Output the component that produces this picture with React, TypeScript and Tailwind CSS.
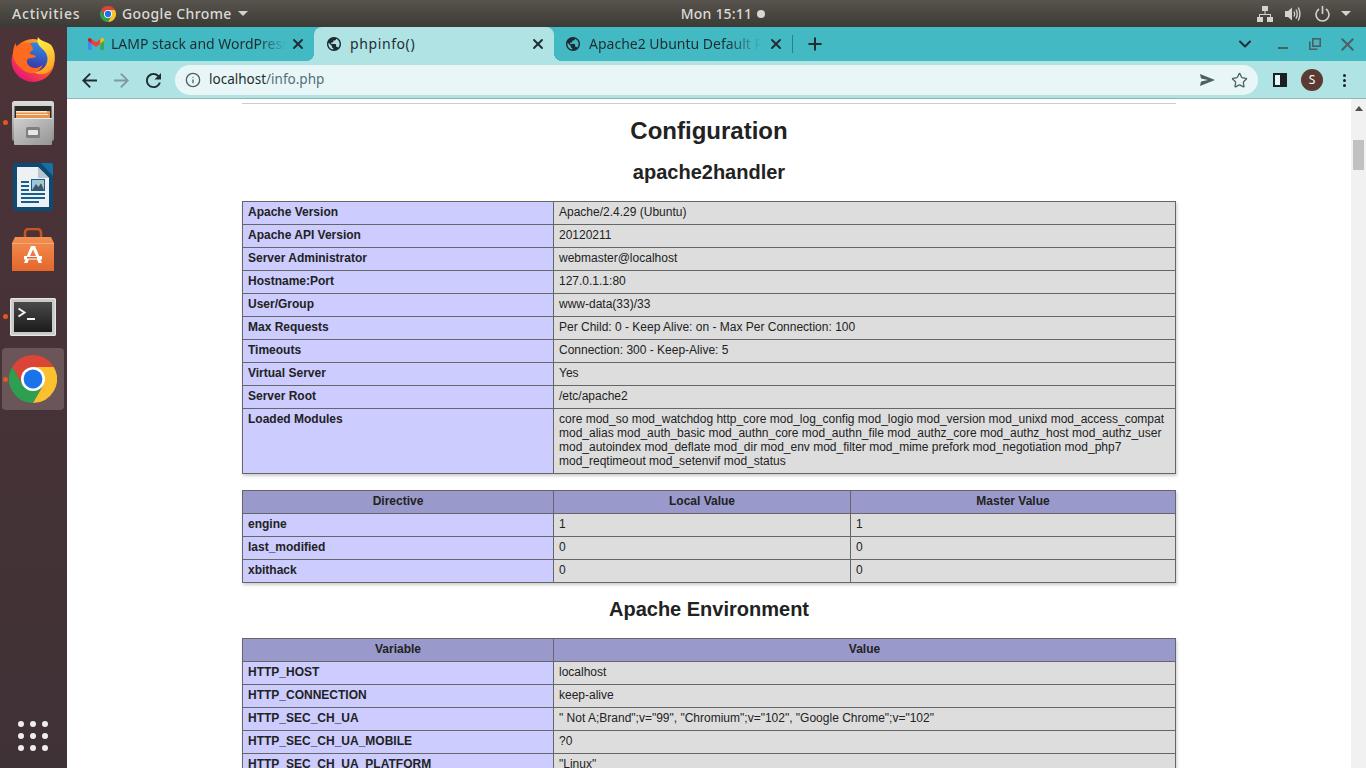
import React from "react";
import { Info, Star, ChevronDown, X, Plus } from "lucide-react";

const GLOBE = "M12 2C6.48 2 2 6.48 2 12s4.48 10 10 10 10-4.48 10-10S17.52 2 12 2zm-1 17.93c-3.95-.49-7-3.85-7-7.93 0-.62.08-1.21.21-1.79L9 15v1c0 1.1.9 2 2 2v1.93zm6.9-2.54c-.26-.81-1-1.39-1.9-1.39h-1v-3c0-.55-.45-1-1-1H8v-2h2c.55 0 1-.45 1-1V7h2c1.1 0 2-.9 2-2v-.41c2.93 1.19 5 4.06 5 7.41 0 2.08-.8 3.97-2.1 5.39z";

function Globe() {
  return (
    <svg width="14" height="14" viewBox="2 2 20 20" className="shrink-0">
      <path d={GLOBE} fill="#1f2a30" />
    </svg>
  );
}

function Chrome({ size }: { size: number }) {
  return (
    <svg width={size} height={size} viewBox="0 0 48 48" className="shrink-0">
      <path d="M44.8 12A24 24 0 0 0 3.2 12L13.6 30L24 24L24 12Z" fill="#db4437" />
      <path d="M3.2 12A24 24 0 0 0 24 48L34.4 30L24 24L13.6 30Z" fill="#2e9e4f" />
      <path d="M24 48A24 24 0 0 0 44.8 12L24 12L24 24L34.4 30Z" fill="#fbc02d" />
      <circle cx="24" cy="24" r="12" fill="#fff" />
      <circle cx="24" cy="24" r="9.4" fill="#1a73e8" />
    </svg>
  );
}

function Gmail() {
  return (
    <svg width="16" height="12" viewBox="0 0 16 12">
      <path d="M0 2v8.8C0 11.5.5 12 1.2 12H3.600V5.200L0 2Z" fill="#4285f4" />
      <path d="M12.400 12h2.400c.7 0 1.200-.5 1.200-1.200V2l-3.600 3.200V12Z" fill="#34a853" />
      <path d="M3.600 5.700 8 9l4.400-3.300V1L8 4.300 3.600 1v4.700Z" fill="#ea4335" />
      <path d="M0 2.800 3.600 5.700V1L2.200.2C1.200-.4 0 .3 0 1.500v1.300Z" fill="#c5221f" />
      <path d="M12.400 1v4.700L16 2.800V1.500C16 .3 14.800-.4 13.800.2L12.400 1Z" fill="#fbbc04" />
    </svg>
  );
}

function Firefox() {
  return (
    <svg width="44" height="45" viewBox="0 0 44 45">
      <defs>
        <linearGradient id="ffa" x1="0.8" y1="0.1" x2="0.2" y2="0.95">
          <stop offset="0" stopColor="#ffb01f" />
          <stop offset="0.45" stopColor="#ff5b2a" />
          <stop offset="1" stopColor="#e3127c" />
        </linearGradient>
        <linearGradient id="ffb" x1="0.6" y1="0" x2="0.4" y2="1">
          <stop offset="0" stopColor="#2f8be6" />
          <stop offset="1" stopColor="#3d2a9c" />
        </linearGradient>
        <linearGradient id="ffc" x1="0.4" y1="0" x2="0.6" y2="1">
          <stop offset="0" stopColor="#fff04a" />
          <stop offset="1" stopColor="#ff9d1e" />
        </linearGradient>
      </defs>
      <circle cx="22" cy="23.500" r="21.500" fill="url(#ffa)" />
      <circle cx="24" cy="20.500" r="15" fill="url(#ffb)" />
      <path d="M27 0C26 4 26.500 6.500 28.500 9 31.500 12.500 36 15 36.500 21 37 30 29 36 22 34.500 28 39 38 38 41.500 30 45 22.500 44.500 14 40.500 8.500 38 5.500 33.500 5 31 3.500 29 2.500 28 1.500 27 0Z" fill="url(#ffc)" />
      <path d="M4.500 6C5 8.500 6 10 7 11.500 10 7 15 5 19 6 19.500 8 22.500 10 22 13 19.500 14.500 18.500 15.500 19 17 21 18 24.500 18 25 19.500 22 22 18 20 16 23 15 27 19 31 24 31 27 31 31 29 32 27.500 29 35 22 38 15.500 35 8 31.500 1 23 2 15 2.500 11 3.500 8 4.500 6Z" fill="#ff6a1f" />
    </svg>
  );
}

function Cabinet() {
  return (
    <svg width="42" height="46" viewBox="0 0 42 46">
      <defs>
        <linearGradient id="cab" x1="0" y1="0" x2="0" y2="1">
          <stop offset="0" stopColor="#dcdcdc" />
          <stop offset="1" stopColor="#8c8c8c" />
        </linearGradient>
        <linearGradient id="draw" x1="0" y1="0" x2="1" y2="1">
          <stop offset="0" stopColor="#cfcfcf" />
          <stop offset="1" stopColor="#959595" />
        </linearGradient>
      </defs>
      <rect x="0" y="1" width="42" height="40" rx="2.500" fill="url(#cab)" />
      <rect x="2.500" y="6" width="37" height="12.500" fill="#2a2a2a" />
      <rect x="4" y="11" width="34" height="7.500" fill="#e8944e" />
      <rect x="4" y="11" width="31" height="1.500" fill="#fbe6c8" />
      <rect x="4" y="14" width="32" height="1" fill="#fbe6c8" />
      <rect x="2" y="18" width="38" height="27" rx="1" fill="url(#draw)" />
      <rect x="2" y="18" width="38" height="1" fill="#e8e8e8" />
      <rect x="14" y="27" width="14" height="11" rx="1.500" fill="#7f7f7f" />
      <rect x="16" y="30" width="10" height="5" rx="1" fill="#e6e6e6" />
    </svg>
  );
}

function Writer() {
  return (
    <svg width="40" height="48" viewBox="0 0 40 48">
      <path d="M2 0H27L40 0V44Q40 48 36 48H4Q0 48 0 44V2Q0 0 2 0Z" fill="#0e4a73" />
      <path d="M28 0H38.500Q40 0 40 1.500V13Z" fill="#1570a6" />
      <path d="M4 4H25L36 15V44H4Z" fill="#eef1f4" />
      <path d="M25 4 36 15H25Z" fill="#b9c6d2" />
      <rect x="8" y="18" width="8" height="2" fill="#175e8e" />
      <rect x="8" y="22" width="8" height="2" fill="#175e8e" />
      <rect x="8" y="26" width="8" height="2" fill="#175e8e" />
      <rect x="8" y="30" width="24" height="2" fill="#175e8e" />
      <rect x="8" y="34" width="24" height="2" fill="#175e8e" />
      <rect x="8" y="38" width="18" height="2" fill="#175e8e" />
      <rect x="18" y="16" width="14" height="12" fill="#175e8e" />
      <rect x="19" y="17" width="12" height="10" fill="#9fc6df" />
      <path d="M19 27 23 21 25.500 24 28 20 31 27Z" fill="#3e5666" />
      <circle cx="28.500" cy="19.500" r="1.200" fill="#e9c24f" />
    </svg>
  );
}

function Bag() {
  return (
    <svg width="42" height="44" viewBox="0 0 42 44">
      <defs>
        <linearGradient id="bag" x1="0" y1="0" x2="0" y2="1">
          <stop offset="0" stopColor="#f39052" />
          <stop offset="1" stopColor="#e4672b" />
        </linearGradient>
      </defs>
      <path d="M13 12V5Q13 1 17 1H25Q29 1 29 5V12" fill="none" stroke="#c9541f" strokeWidth="2.500" />
      <path d="M3 9H39L42 15V43H0V15Z" fill="url(#bag)" />
      <path d="M0 15H42V16H0Z" fill="#f7a878" />
      <path d="M21 18 H19 L12 35 H15.500 L17 31 H25 L26.500 35 H30 L23 18Z M18 28 21 21.500 24 28Z" fill="#fff" />
      <rect x="12" y="28" width="18" height="3.500" fill="#fff" />
      <rect x="15" y="29" width="10" height="1.500" fill="#e4672b" />
    </svg>
  );
}

function Terminal() {
  return (
    <svg width="46" height="38" viewBox="0 0 46 38">
      <defs>
        <linearGradient id="term" x1="0" y1="0" x2="0" y2="1">
          <stop offset="0" stopColor="#4a4a4a" />
          <stop offset="1" stopColor="#1b1b1b" />
        </linearGradient>
      </defs>
      <rect x="0" y="0" width="46" height="38" rx="1.500" fill="#c9c9c9" />
      <rect x="0.700" y="0.700" width="44.600" height="36.600" rx="1" fill="none" stroke="#ededed" strokeWidth="1" />
      <rect x="4" y="4" width="38" height="30" fill="url(#term)" />
      <path d="M8.500 10.500 14.500 14.500 8.500 18.500" fill="none" stroke="#f2f2f2" strokeWidth="2" />
      <rect x="17" y="20" width="8" height="2" fill="#f2f2f2" />
    </svg>
  );
}

function NetworkIcon() {
  return (
    <svg width="16" height="16" viewBox="0 0 16 16" fill="#d4d2cd">
      <rect x="5" y="0" width="6" height="5" />
      <rect x="0" y="11" width="6" height="5" />
      <rect x="10" y="11" width="6" height="5" />
      <path d="M7.500 5h1v3H14v3h-1V9H3v2H2V8h5.500Z" />
    </svg>
  );
}

function VolumeIcon() {
  return (
    <svg width="16" height="16" viewBox="0 0 16 16" fill="none">
      <path d="M0 5H3L7 1.500V14.500L3 11H0Z" fill="#d4d2cd" />
      <path d="M9 5.500Q10.500 8 9 10.500" stroke="#d4d2cd" strokeWidth="1.400" />
      <path d="M11 3.500Q13.500 8 11 12.500" stroke="#d4d2cd" strokeWidth="1.400" />
      <path d="M13.300 1.500Q16.500 8 13.300 14.500" stroke="#d4d2cd" strokeWidth="1.400" />
    </svg>
  );
}

function PowerIcon() {
  return (
    <svg width="15" height="16" viewBox="0 0 15 16" fill="none" stroke="#d4d2cd" strokeWidth="1.600">
      <path d="M7.500 0V8" />
      <path d="M4 3A6.500 6.500 0 1 0 11 3" />
    </svg>
  );
}

function Caret({ color = "#d4d2cd" }: { color?: string }) {
  return (
    <svg width="10" height="5" viewBox="0 0 10 5">
      <path d="M0 0H10L5 5Z" fill={color} />
    </svg>
  );
}

function Material({ d, color }: { d: string; color: string }) {
  return (
    <svg width="15" height="15" viewBox="4 4 16 16" className="shrink-0">
      <path d={d} fill={color} />
    </svg>
  );
}

type Row = [string, string];

const info: Row[] = [
  ["Apache Version", "Apache/2.4.29 (Ubuntu)"],
  ["Apache API Version", "20120211"],
  ["Server Administrator", "webmaster@localhost"],
  ["Hostname:Port", "127.0.1.1:80"],
  ["User/Group", "www-data(33)/33"],
  ["Max Requests", "Per Child: 0 - Keep Alive: on - Max Per Connection: 100"],
  ["Timeouts", "Connection: 300 - Keep-Alive: 5"],
  ["Virtual Server", "Yes"],
  ["Server Root", "/etc/apache2"],
  [
    "Loaded Modules",
    "core mod_so mod_watchdog http_core mod_log_config mod_logio mod_version mod_unixd mod_access_compat mod_alias mod_auth_basic mod_authn_core mod_authn_file mod_authz_core mod_authz_host mod_authz_user mod_autoindex mod_deflate mod_dir mod_env mod_filter mod_mime prefork mod_negotiation mod_php7 mod_reqtimeout mod_setenvif mod_status",
  ],
];

const directives: [string, string, string][] = [
  ["engine", "1", "1"],
  ["last_modified", "0", "0"],
  ["xbithack", "0", "0"],
];

const env: Row[] = [
  ["HTTP_HOST", "localhost"],
  ["HTTP_CONNECTION", "keep-alive"],
  ["HTTP_SEC_CH_UA", '" Not A;Brand";v="99", "Chromium";v="102", "Google Chrome";v="102"'],
  ["HTTP_SEC_CH_UA_MOBILE", "?0"],
  ["HTTP_SEC_CH_UA_PLATFORM", '"Linux"'],
];

const tableCls = "w-[934px] table-fixed border-collapse shadow-[1px_2px_3px_#ccc] text-[12px] leading-[14px] text-[#222]";
const eCls = "border border-[#666] bg-[#ccf] px-[5px] pt-[3px] pb-[5px] font-bold align-top text-left";
const vCls = "border border-[#666] bg-[#ddd] px-[5px] pt-[3px] pb-[5px] align-top text-left break-words";
const hCls = "border border-[#666] bg-[#99c] px-[5px] pt-[3px] pb-[5px] font-bold text-center";
const h2Cls = "w-[934px] text-[20px] leading-[23px] font-bold text-center text-[#222]";

function DockTile({ children, dot, active, className, nudge }: { children: React.ReactNode; dot?: boolean; active?: boolean; className: string; nudge?: boolean }) {
  return (
    <div className={`relative flex items-center justify-center pr-[1px] ${className}`}>
      {active && <div className="absolute left-[2px] top-0 w-[62px] h-[62px] rounded-[4px] bg-[#6a5559]" />}
      {dot && <div className="absolute left-[3px] top-1/2 -mt-[2.500px] w-[5px] h-[5px] rounded-full bg-[#e95420]" />}
      <div className={`relative flex ${nudge ? "pt-[2px]" : ""}`}>{children}</div>
    </div>
  );
}

const tabText = "font-['Noto_Sans',sans-serif] text-[14px] text-[#1f2d33] whitespace-nowrap overflow-hidden pb-[2px]";

export default function App() {
  return (
    <div className="w-[1366px] h-[768px] overflow-hidden flex flex-col font-['Liberation_Sans',sans-serif] bg-white">
      {/* top bar */}
      <div className="h-[27px] shrink-0 flex items-center bg-gradient-to-b from-[#58544d] to-[#3c3a35] font-['Noto_Sans',sans-serif] text-[14px] font-medium text-[#dcdad5]">
        <span className="ml-3 w-[88px] tracking-[0.8px]">Activities</span>
        <Chrome size={16} />
        <span className="ml-[6px] tracking-[0.4px]">Google Chrome</span>
        <div className="ml-[6px]"><Caret /></div>
        <div className="ml-[433px] flex items-center gap-[5px]">
          <span className="tracking-[0.2px]">Mon 15:11</span>
          <span className="w-2 h-2 rounded-full bg-[#d8d6d1]" />
        </div>
        <div className="ml-auto flex items-center pr-[15px]">
          <NetworkIcon />
          <div className="ml-[12px]"><VolumeIcon /></div>
          <div className="ml-[14px]"><PowerIcon /></div>
          <div className="ml-[11px]"><Caret /></div>
        </div>
      </div>

      <div className="flex-1 flex min-h-0">
        {/* dock */}
        <div className="w-[67px] shrink-0 flex flex-col bg-gradient-to-b from-[#4c3338] to-[#3f3236]">
          <DockTile className="h-[60px] mt-[2px]"><Firefox /></DockTile>
          <DockTile className="h-[62px] mt-[2px]" dot nudge><Cabinet /></DockTile>
          <DockTile className="h-[62px] mt-[3px]"><Writer /></DockTile>
          <DockTile className="h-[62px] mt-[1px]"><Bag /></DockTile>
          <DockTile className="h-[62px] mt-[4px]" dot nudge><Terminal /></DockTile>
          <DockTile className="h-[62px] mt-[1px]" dot active><Chrome size={48} /></DockTile>
          <div className="mt-auto mb-[17px] grid grid-cols-3 gap-x-[6px] gap-y-[6px] w-[30px] ml-[18px]">
            {Array.from({ length: 9 }).map((_, i) => (
              <span key={i} className="w-[6px] h-[6px] rounded-full bg-[#eeeeee]" />
            ))}
          </div>
        </div>

        {/* browser */}
        <div className="flex-1 min-w-0 flex flex-col">
          {/* tab strip */}
          <div className="h-[34px] shrink-0 bg-[#42b9c3] flex items-stretch">
            <div className="w-[247px] flex items-center pl-[21px]">
              <Gmail />
              <span className={`${tabText} ml-[7px] w-[175px] [mask-image:linear-gradient(to_right,#000_84%,transparent)]`}>LAMP stack and WordPress</span>
              <X size={16} strokeWidth={2.8} className="ml-[4px] text-[#1f2d33]" />
            </div>
            <div className="w-[240px] relative bg-[#b0e3e4] rounded-t-[8px] flex items-center pl-[13px] pr-[8px]">
              <div className="absolute -left-2 bottom-0 w-2 h-2 bg-[radial-gradient(circle_at_0_0,transparent_8px,#b0e3e4_8px)]" />
              <div className="absolute -right-2 bottom-0 w-2 h-2 bg-[radial-gradient(circle_at_100%_0,transparent_8px,#b0e3e4_8px)]" />
              <Globe />
              <span className={`${tabText} ml-[9px] flex-1 tracking-[0.6px]`}>phpinfo()</span>
              <X size={16} strokeWidth={2.8} className="text-[#1f2d33]" />
            </div>
            <div className="w-[239px] flex items-center pl-[12px] pr-[8px] border-r border-[#2f7f87] my-[8px]">
              <Globe />
              <span className={`${tabText} ml-[9px] w-[172px] [mask-image:linear-gradient(to_right,#000_80%,transparent)]`}>Apache2 Ubuntu Default Page</span>
              <X size={16} strokeWidth={2.8} className="ml-auto text-[#1f2d33]" />
            </div>
            <div className="flex items-center pl-[12px]">
              <Plus size={20} strokeWidth={2.4} className="text-[#1f2d33]" />
            </div>
            <div className="ml-auto flex items-center">
              <ChevronDown size={20} strokeWidth={2.4} className="text-[#1f2d33]" />
              <div className="ml-[20px] w-[16px] flex justify-center pt-[7px]"><div className="w-[10px] h-[2px] bg-[#4e5f63]" /></div>
              <div className="ml-[18px]">
                <svg width="12" height="12" viewBox="0 0 12 12" fill="none" stroke="#4e5f63" strokeWidth="1.600">
                  <rect x="3.800" y="0.800" width="7.400" height="7.400" />
                  <path d="M0.800 3.500V11.200H8.500" />
                </svg>
              </div>
              <X size={21} strokeWidth={2.2} className="ml-[16px] mr-[8px] text-[#4e5f63]" />
            </div>
          </div>

          {/* toolbar */}
          <div className="h-[38px] shrink-0 bg-[#b0e3e4] border-b border-[#8fb7b8] flex items-center pt-[1px]">
            <div className="ml-[15px]"><Material color="#1f2d33" d="M20 11H7.830l5.590-5.590L12 4l-8 8 8 8 1.410-1.410L7.830 13H20v-2z" /></div>
            <div className="ml-[17px]"><Material color="#7d9a9e" d="M12 4l-1.410 1.410L16.170 11H4v2h12.170l-5.580 5.590L12 20l8-8z" /></div>
            <div className="ml-[17px]"><Material color="#1f2d33" d="M17.650 6.350C16.200 4.900 14.210 4 12 4c-4.420 0-7.990 3.580-7.990 8s3.570 8 7.990 8c3.730 0 6.840-2.550 7.730-6h-2.080c-.82 2.330-3.040 4-5.650 4-3.310 0-6-2.690-6-6s2.690-6 6-6c1.660 0 3.140.69 4.220 1.780L13 11h7V4l-2.350 2.350z" /></div>
            <div className="ml-[14px] w-[1083px] h-[30px] rounded-[15px] bg-[#e9f6f7] flex items-center pl-[10px] pr-[10px]">
              <Info size={16} strokeWidth={2} className="text-[#4d5f63]" />
              <span className="ml-[8px] font-['Noto_Sans',sans-serif] text-[13.500px] pb-[2px] text-[#1f2d33]">localhost<span className="text-[#4f7177]">/info.php</span></span>
              <div className="ml-auto flex items-center">
                <svg width="15" height="12" viewBox="0 0 15 12"><path d="M0 0 15 6 0 12 1 7.500 8 6 1 4.500Z" fill="#4e5f63" /></svg>
                <Star size={17} strokeWidth={1.800} className="ml-[16px] text-[#4e5f63]" />
              </div>
            </div>
            <div className="ml-[15px] w-[14px] h-[14px] border-[2px] border-[#1b2022] bg-[#e9f6f7] flex justify-end">
              <div className="w-[5px] h-full bg-[#1b2022]" />
            </div>
            <div className="ml-[14px] w-[22px] h-[22px] rounded-full bg-[#5b3a31] flex items-center justify-center text-white text-[12px] font-['Noto_Sans',sans-serif]">S</div>
            <div className="ml-[20px] flex flex-col gap-[2px]">
              <span className="w-[3px] h-[3px] rounded-full bg-[#1b2022]" />
              <span className="w-[3px] h-[3px] rounded-full bg-[#1b2022]" />
              <span className="w-[3px] h-[3px] rounded-full bg-[#1b2022]" />
            </div>
          </div>

          {/* page */}
          <div className="flex-1 min-h-0 flex">
            <div className="flex-1 min-w-0 overflow-hidden pl-[175px]">
              <div className="w-[934px] h-[1px] bg-[#ccc] mt-[4px]" />
              <h1 className="w-[934px] text-[24px] leading-[28px] font-bold text-center text-[#222] mt-[13px]">Configuration</h1>
              <h2 className={`${h2Cls} mt-[16px]`}>apache2handler</h2>
              <table className={`${tableCls} mt-[17px]`}>
                <colgroup><col className="w-[311px]" /><col /></colgroup>
                <tbody>
                  {info.map(([a, b]) => (
                    <tr key={a}><td className={eCls}>{a}</td><td className={vCls}>{b}</td></tr>
                  ))}
                </tbody>
              </table>
              <table className={`${tableCls} mt-[16px]`}>
                <colgroup><col className="w-[311px]" /><col className="w-[297px]" /><col /></colgroup>
                <tbody>
                  <tr><th className={hCls}>Directive</th><th className={hCls}>Local Value</th><th className={hCls}>Master Value</th></tr>
                  {directives.map(([a, b, c]) => (
                    <tr key={a}><td className={eCls}>{a}</td><td className={vCls}>{b}</td><td className={vCls}>{c}</td></tr>
                  ))}
                </tbody>
              </table>
              <h2 className={`${h2Cls} mt-[15px]`}>Apache Environment</h2>
              <table className={`${tableCls} mt-[17px]`}>
                <colgroup><col className="w-[311px]" /><col /></colgroup>
                <tbody>
                  <tr><th className={hCls}>Variable</th><th className={hCls}>Value</th></tr>
                  {env.map(([a, b]) => (
                    <tr key={a}><td className={eCls}>{a}</td><td className={vCls}>{b}</td></tr>
                  ))}
                </tbody>
              </table>
            </div>
            {/* scrollbar */}
            <div className="w-[15px] shrink-0 bg-[#f1f1f1] flex flex-col items-center">
              <svg width="8" height="5" viewBox="0 0 8 5" className="mt-[7px]"><path d="M0 5H8L4 0Z" fill="#505050" /></svg>
              <div className="w-[11px] h-[30px] bg-[#c1c1c1] mt-[29px]" />
            </div>
          </div>
        </div>
      </div>
    </div>
  );
}
